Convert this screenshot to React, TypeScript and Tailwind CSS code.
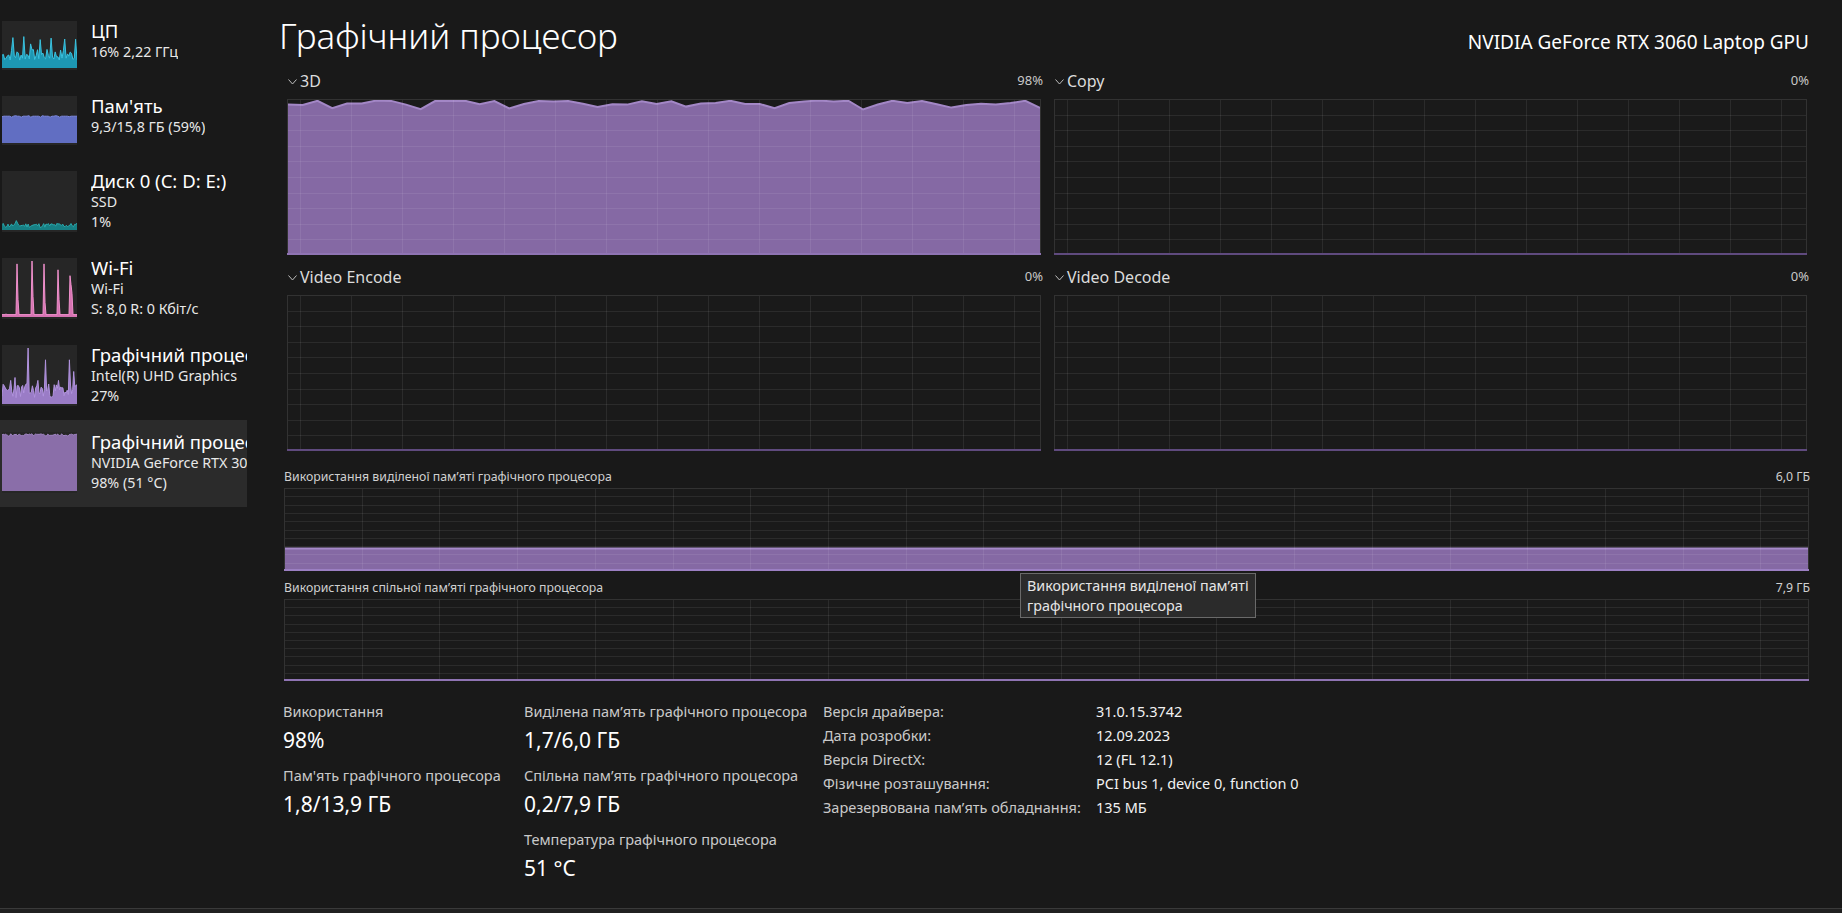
import React from "react";

const seeded = (seed: number) => {
  let s = seed;
  return () => {
    s = (s * 9301 + 49297) % 233280;
    return s / 233280;
  };
};

const areaPath = (vals: number[], w: number, h: number) => {
  const step = w / (vals.length - 1);
  let d = `M0 ${h}`;
  vals.forEach((v, i) => {
    d += ` L${(i * step).toFixed(1)} ${(h - v * h).toFixed(1)}`;
  });
  return d + ` L${w} ${h} Z`;
};

const linePath = (vals: number[], w: number, h: number) => {
  const step = w / (vals.length - 1);
  return vals
    .map((v, i) => `${i === 0 ? "M" : "L"}${(i * step).toFixed(1)} ${(h - v * h).toFixed(1)}`)
    .join(" ");
};

// sidebar thumbnails data
const r1 = seeded(7);
const cpuVals = Array.from({ length: 56 }, (_, i) =>
  [8, 16, 21, 28, 36, 46, 54].includes(i) ? 0.5 + r1() * 0.25 : 0.15 + r1() * 0.25
);
const memVals = Array.from({ length: 40 }, (_, i) => 0.57 + (i % 5 === 0 ? -0.02 : 0) + (i % 7 === 0 ? 0.01 : 0));
const r2 = seeded(11);
const diskVals = Array.from({ length: 64 }, (_, i) => (i === 12 ? 0.16 : 0.04 + r2() * 0.08));
const wifiVals = Array.from({ length: 76 }, (_, i) => {
  const peaks: Record<number, number> = { 4: 0.05, 15: 0.9, 16: 0.3, 30: 0.95, 31: 0.35, 42: 0.9, 43: 0.25, 56: 0.8, 57: 0.3, 68: 0.7, 69: 0.55, 70: 0.4 };
  return peaks[i] ?? 0.04;
});
const r3 = seeded(23);
const gpu0Vals = Array.from({ length: 70 }, (_, i) => {
  const peaks: Record<number, number> = { 8: 0.4, 12: 0.45, 24: 0.95, 33: 0.4, 40: 0.75, 52: 0.4, 62: 0.75, 66: 0.55 };
  return peaks[i] ?? 0.1 + r3() * 0.25;
});
const r4 = seeded(5);
const gpu1Vals = Array.from({ length: 70 }, () => 0.93 + r4() * 0.04);

// 3D engine wave (dip in px from the top)
const r5 = seeded(41);
const wave = Array.from({ length: 52 }, (_, i) => {
  const x = r5();
  if (i % 6 === 3) return 6 + x * 4;
  return x < 0.5 ? 0.5 + x * 2 : 1 + x * 4;
});

type ThumbProps = { vals: number[]; fill: string; stroke: string; h: number };

function Thumb({ vals, fill, stroke, h }: ThumbProps) {
  return (
    <svg width={75} height={h} className="block">
      <rect width={75} height={h} fill="#262626" />
      <path d={areaPath(vals, 75, h - 2)} fill={fill} />
      <path d={linePath(vals, 75, h - 2)} fill="none" stroke={stroke} strokeWidth={1} />
    </svg>
  );
}

type SideProps = {
  title: string;
  lines: string[];
  thumb: React.ReactNode;
  selected?: boolean;
};

function SideItem({ title, lines, thumb, selected }: SideProps) {
  return (
    <div
      className={
        selected
          ? "flex items-start pt-[12px] pb-[14px] pl-[2px] bg-[#2b2b2b]"
          : "flex items-start pt-[12px] pb-[14px] pl-[2px]"
      }
    >
      <div className="shrink-0">{thumb}</div>
      <div className="ml-[14px] mt-[-1px] min-w-0 overflow-hidden whitespace-nowrap">
        <div className="text-[18.5px] leading-[22px] text-white">{title}</div>
        {lines.map((l) => (
          <div key={l} className="text-[14.3px] leading-[20px] text-[#e8e8e8]">
            {l}
          </div>
        ))}
      </div>
    </div>
  );
}

function Chevron() {
  return (
    <svg width={9} height={6} viewBox="0 0 9 6" className="block">
      <polyline points="0.5,0.5 4.5,5 8.5,0.5" fill="none" stroke="#bdbdbd" strokeWidth={1} />
    </svg>
  );
}

type ChartProps = { w: number; h: number; rows: number; step: number; offset: number; children?: React.ReactNode; bottom?: string };

function GridChart({ w, h, rows, step, offset, children, bottom = "#6d5590" }: ChartProps) {
  const hl = Array.from({ length: rows - 1 }, (_, i) => ((i + 1) * h) / rows);
  const vl: number[] = [];
  for (let x = offset; x < w - 1; x += step) vl.push(x);
  return (
    <svg width={w} height={h} className="block">
      <rect x={0} y={0} width={w} height={h} fill="#1a1a1a" />
      {children}
      {hl.map((y) => (
        <line key={"h" + y} x1={0} x2={w} y1={Math.round(y) + 0.5} y2={Math.round(y) + 0.5} stroke="rgba(255,255,255,0.08)" />
      ))}
      {vl.map((x) => (
        <line key={"v" + x} y1={0} y2={h} x1={Math.round(x) + 0.5} x2={Math.round(x) + 0.5} stroke="rgba(255,255,255,0.08)" />
      ))}
      <rect x={0.5} y={0.5} width={w - 1} height={h - 1} fill="none" stroke="#323232" />
      <line x1={0} x2={w} y1={h - 1} y2={h - 1} stroke={bottom} strokeWidth={2} />
    </svg>
  );
}

function EngineChart({ w, label, pct, busy }: { w: number; label: string; pct: string; busy?: boolean }) {
  const step = (w - 2) / (wave.length - 1);
  const pts = wave.map((d, i) => `${(1 + i * step).toFixed(1)},${(1 + d).toFixed(1)}`);
  return (
    <div>
      <div className="h-[40px] pt-[4px] flex items-center justify-between">
        <div className="flex items-center">
          <div className="ml-[1px] mr-[3px] mt-[1px]">
            <Chevron />
          </div>
          <span className="text-[16px] text-[#dcdcdc]">{label}</span>
        </div>
        <span className="text-[13px] text-[#c8c8c8] mr-[-2px]">{pct}</span>
      </div>
      <GridChart w={w} h={156} rows={10} step={51} offset={13} bottom={busy ? "#8f74b3" : "#5f4a7e"}>
        {busy && (
          <>
            <polygon points={`1,155 ${pts.join(" ")} ${w - 1},155`} fill="#8569a4" />
            <polyline points={pts.join(" ")} fill="none" stroke="#a387c6" strokeWidth={2} />
          </>
        )}
      </GridChart>
    </div>
  );
}

const stats = [
  ["Версія драйвера:", "31.0.15.3742"],
  ["Дата розробки:", "12.09.2023"],
  ["Версія DirectX:", "12 (FL 12.1)"],
  ["Фізичне розташування:", "PCI bus 1, device 0, function 0"],
  ["Зарезервована пам’ять обладнання:", "135 МБ"],
];

function Stat({ label, value }: { label: string; value: string }) {
  return (
    <div className="mb-[7px]">
      <div className="text-[14.5px] leading-[20px] text-[#c9c9c9]">{label}</div>
      <div className="mt-[1px] text-[21px] leading-[36px] text-white">{value}</div>
    </div>
  );
}

export default function App() {
  return (
    <div className="w-[1842px] h-[913px] bg-[#191919] text-white overflow-hidden flex flex-col font-['Noto_Sans','Open_Sans',sans-serif]">
      <div className="flex flex-1 min-h-0">
        <aside className="w-[247px] shrink-0 pt-[9px]">
          <SideItem
            title="ЦП"
            lines={["16%  2,22 ГГц"]}
            thumb={<Thumb vals={cpuVals} h={49} fill="#1d97b3" stroke="#3ac2df" />}
          />
          <SideItem
            title="Пам'ять"
            lines={["9,3/15,8 ГБ (59%)"]}
            thumb={<Thumb vals={memVals} h={49} fill="#616ec2" stroke="#7d89df" />}
          />
          <SideItem
            title="Диск 0 (C: D: E:)"
            lines={["SSD", "1%"]}
            thumb={<Thumb vals={diskVals} h={61} fill="#177f84" stroke="#2aa9ad" />}
          />
          <SideItem
            title="Wi-Fi"
            lines={["Wi-Fi", "S: 8,0 R: 0 Кбіт/с"]}
            thumb={<Thumb vals={wifiVals} h={61} fill="#d673b2" stroke="#f090cc" />}
          />
          <SideItem
            title="Графічний процесор 0"
            lines={["Intel(R) UHD Graphics", "27%"]}
            thumb={<Thumb vals={gpu0Vals} h={61} fill="#9a7cc6" stroke="#b193de" />}
          />
          <SideItem
            selected
            title="Графічний процесор 1"
            lines={["NVIDIA GeForce RTX 3060 Laptop GPU", "98%  (51 °C)"]}
            thumb={<Thumb vals={gpu1Vals} h={61} fill="#8a6ea9" stroke="#a387c6" />}
          />
        </aside>

        <main className="relative flex-1 pl-[36px] pr-[33px]">
          <div className="h-[59px] pt-[14px] flex items-baseline justify-between">
            <h1 className="ml-[-4px] text-[35px] leading-[44px] font-light text-white">Графічний процесор</h1>
            <div className="text-[19px] text-white">NVIDIA GeForce RTX 3060 Laptop GPU</div>
          </div>

          <div className="ml-[4px] mr-[2px] grid grid-cols-[754px_753px] gap-x-[13px]">
            <EngineChart w={754} label="3D" pct="98%" busy />
            <EngineChart w={753} label="Copy" pct="0%" />
            <EngineChart w={754} label="Video Encode" pct="0%" />
            <EngineChart w={753} label="Video Decode" pct="0%" />
          </div>

          <div className="ml-[1px]">
            <div className="h-[37px] pb-[3px] flex items-end justify-between text-[12.3px] leading-[16px] text-[#d0d0d0]">
              <span>Використання виділеної пам’яті графічного процесора</span>
              <span className="mr-[-1px]">6,0 ГБ</span>
            </div>
            <GridChart w={1525} h={83} rows={10} step={77.7} offset={77.7} bottom="#9b7fc2">
              <rect x={0} y={60} width={1525} height={23} fill="#8569a4" />
              <line x1={0} x2={1525} y1={60.5} y2={60.5} stroke="#a68ac9" strokeWidth={2} />
            </GridChart>
            <div className="h-[28px] pb-[3px] flex items-end justify-between text-[12.3px] leading-[16px] text-[#d0d0d0]">
              <span>Використання спільної пам’яті графічного процесора</span>
              <span className="mr-[-1px]">7,9 ГБ</span>
            </div>
            <GridChart w={1525} h={82} rows={10} step={77.7} offset={77.7} bottom="#8f74b3" />
          </div>

          <div className="mt-[20px] flex">
            <div className="w-[241px] shrink-0">
              <Stat label="Використання" value="98%" />
              <Stat label="Пам'ять графічного процесора" value="1,8/13,9 ГБ" />
            </div>
            <div className="w-[299px] shrink-0">
              <Stat label="Виділена пам’ять графічного процесора" value="1,7/6,0 ГБ" />
              <Stat label="Спільна пам’ять графічного процесора" value="0,2/7,9 ГБ" />
              <Stat label="Температура графічного процесора" value="51 °C" />
            </div>
            <div className="mt-[-2px]">
              {stats.map(([k, v]) => (
                <div key={k} className="flex text-[14.5px] leading-[24px]">
                  <span className="w-[273px] shrink-0 text-[#c9c9c9]">{k}</span>
                  <span className="text-[#f2f2f2]">{v}</span>
                </div>
              ))}
            </div>
          </div>

          <div className="absolute left-[773px] top-[573px] w-[236px] border border-[#6a6a6a] bg-[#2b2b2b] px-[6px] pt-[2px] pb-[1px] text-[14.3px] leading-[20px] text-[#e6e6e6] whitespace-nowrap">
            Використання виділеної пам’яті
            <br />
            графічного процесора
          </div>
        </main>
      </div>
      <div className="h-[5px] shrink-0 border-t border-[#3a3a3a] bg-[#202020]" />
    </div>
  );
}
